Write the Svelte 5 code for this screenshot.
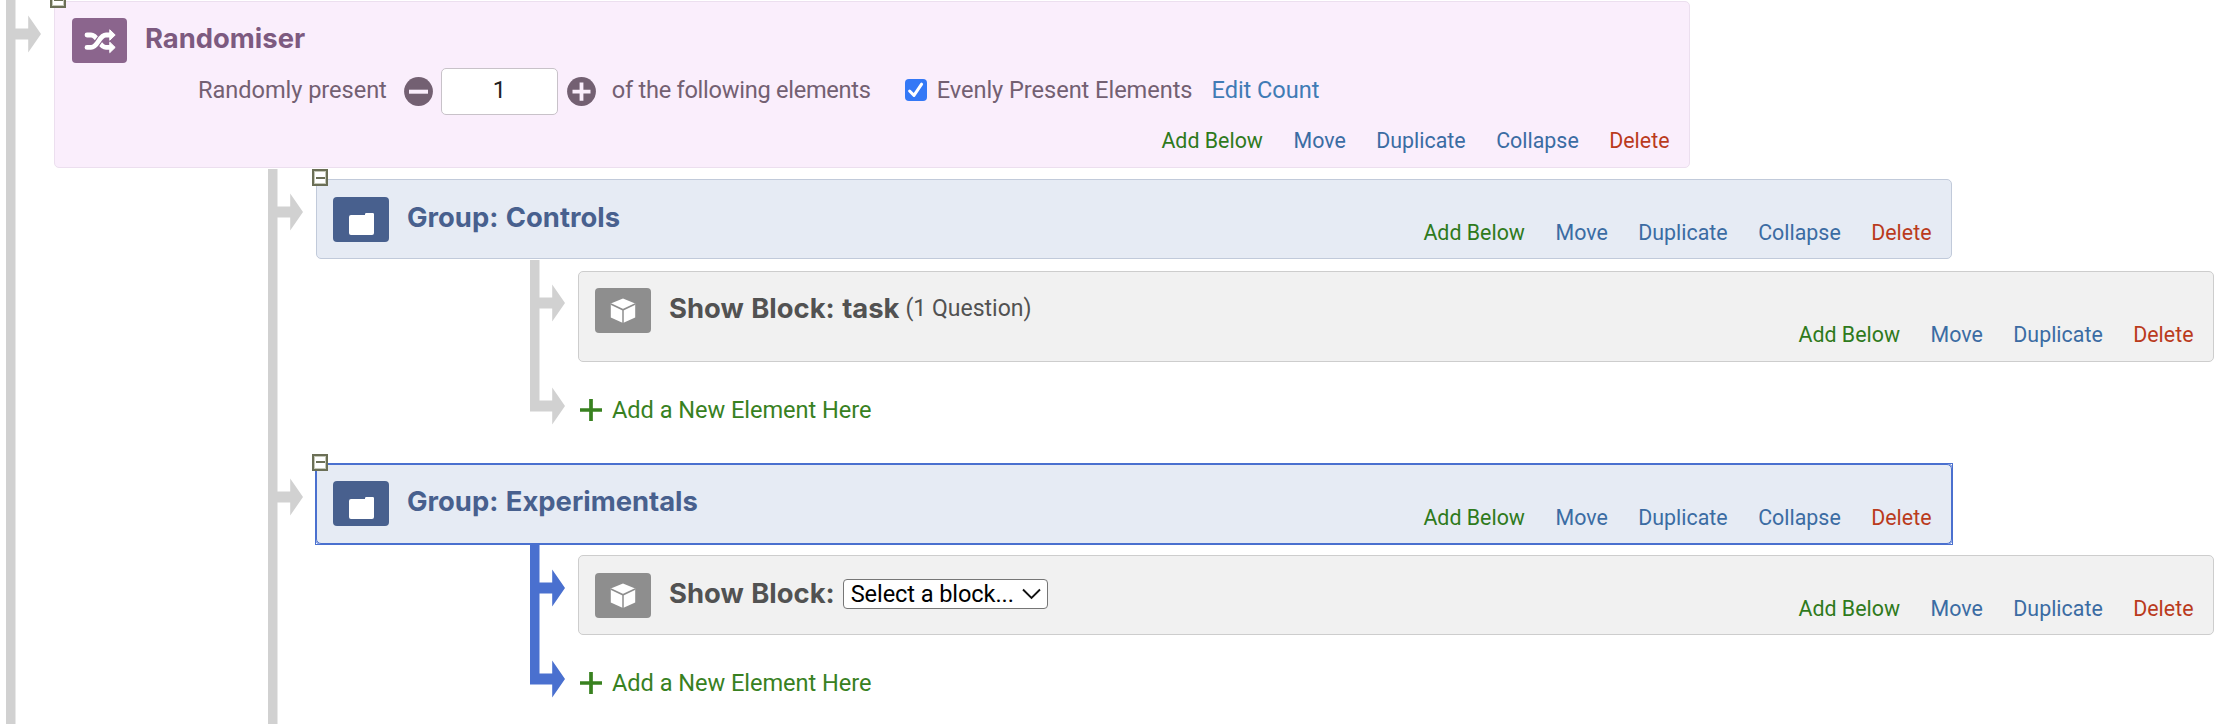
<script>
  const full = ['Add Below', 'Move', 'Duplicate', 'Collapse', 'Delete'];
  const short = ['Add Below', 'Move', 'Duplicate', 'Delete'];
  const tone = (a) => (a === 'Add Below' ? 'add' : a === 'Delete' ? 'delete' : 'plain');

  const groups = [
    { name: 'Group: Controls', selected: false, block: { title: 'Show Block: task', note: '(1 Question)' } },
    { name: 'Group: Experimentals', selected: true, block: { title: 'Show Block:', select: 'Select a block...' } }
  ];
</script>

{#snippet arrow()}
  <svg class="arrow" width="36" height="38" viewBox="0 0 36 38">
    <path d="M0 13.5H22.2V.5L35 19 22.2 37.5V24.5H0Z" fill="currentColor" />
  </svg>
{/snippet}

{#snippet toggle()}
  <span class="toggle"><i></i></span>
{/snippet}

{#snippet actions(list)}
  <nav class="actions">
    {#each list as a}<span class={tone(a)}>{a}</span>{/each}
  </nav>
{/snippet}

<main>
  <div class="node root">
    <div class="gutter">{@render arrow()}</div>
    <div class="body">
      <section class="box randomiser">
        {@render toggle()}
        <header>
          <span class="icon">
            <svg width="55" height="45" viewBox="0 0 55 45" fill="none" stroke="#fff" stroke-width="4.8" stroke-linecap="round">
              <path d="M15 17H19C26 17 27 29.4 34 29.4H39" />
              <path d="M15 29.4H19C26 29.4 27 17 34 17H39" stroke="#8b658d" stroke-width="7" stroke-linecap="butt" stroke-dasharray="0 8 13 40" />
              <path d="M15 29.4H19C26 29.4 27 17 34 17H39" />
              <path d="M38 12 43.2 17 38 22ZM38 24.4 43.2 29.4 38 34.4Z" fill="#fff" stroke-width="1" stroke-linejoin="round" />
            </svg>
          </span>
          <h2>Randomiser</h2>
        </header>
        <div class="settings">
          <span class="label">Randomly present</span>
          <svg class="minus" width="29" height="29" viewBox="0 0 29 29">
            <circle cx="14.5" cy="14.5" r="14.4" fill="#736072" />
            <path d="M5 14.7H24" stroke="#faeefc" stroke-width="4" />
          </svg>
          <span class="count">1</span>
          <svg class="plus" width="29" height="29" viewBox="0 0 29 29">
            <circle cx="14.5" cy="14.5" r="14.4" fill="#736072" />
            <path d="M5.5 14.7H23.5M14.5 5.5V23.7" stroke="#faeefc" stroke-width="3.8" />
          </svg>
          <span class="label following">of the following elements</span>
          <svg class="check" width="22" height="22" viewBox="0 0 22 22">
            <rect width="22" height="22" rx="4" fill="#3478f6" />
            <path d="M4.6 12 9 16.4 16.6 5.2" fill="none" stroke="#fff" stroke-width="3" stroke-linecap="round" stroke-linejoin="round" />
          </svg>
          <span class="label evenly">Evenly Present Elements</span>
          <span class="label edit">Edit Count</span>
        </div>
        {@render actions(full)}
      </section>

      <div class="children">
        {#each groups as g}
          <div class="node">
            <div class="gutter">{@render arrow()}</div>
            <div class="body">
              <section class="box group" class:selected={g.selected}>
                {@render toggle()}
                <header>
                  <span class="icon">
                    <svg width="56" height="45" viewBox="0 0 56 45">
                      <path d="M18 18H32V17.2Q32 16 33.2 16H39.8Q41 16 41 17.2V36Q41 38 39 38H18Q16 38 16 36V20Q16 18 18 18Z" fill="#fff" />
                    </svg>
                  </span>
                  <h2>{g.name}</h2>
                </header>
                {@render actions(full)}
              </section>

              <div class="children" class:active={g.selected}>
                <div class="node leaf">
                  <div class="gutter">{@render arrow()}</div>
                  <div class="body">
                    <section class="box block" class:tall={g.block.note}>
                      <header>
                        <span class="icon">
                          <svg width="56" height="45" viewBox="0 0 56 45">
                            <path d="M28 10.4 40.2 15.6V29.6L28 35 15.8 29.6V15.6Z" fill="#fff" />
                            <path d="M15.8 16 28 21.8 40.2 16M28 21.8V35" fill="none" stroke="#8e8e8e" stroke-width="1.5" />
                          </svg>
                        </span>
                        <h2>{g.block.title}</h2>
                        {#if g.block.note}<span class="note">{g.block.note}</span>{/if}
                        {#if g.block.select}
                          <span class="select">
                            {g.block.select}
                            <svg width="19" height="12" viewBox="0 0 19 12">
                              <path d="M1 1.5 9.5 10 18 1.5" fill="none" stroke="#111" stroke-width="1.9" />
                            </svg>
                          </span>
                        {/if}
                      </header>
                      {@render actions(short)}
                    </section>
                  </div>
                </div>
                <div class="node last">
                  <div class="gutter">{@render arrow()}</div>
                  <div class="new">
                    <svg width="22" height="22" viewBox="0 0 22 22">
                      <path d="M0 11H22M11 0V22" stroke="#38811f" stroke-width="3.7" />
                    </svg>
                    <span>Add a New Element Here</span>
                  </div>
                </div>
              </div>
            </div>
          </div>
        {/each}
      </div>
    </div>
  </div>
</main>

<style>
  :global(body) { background: #fff; }
  main {
    height: 724px;
    padding-left: 6px;
    overflow: hidden;
    box-sizing: border-box;
    font: 23.6px/28px Roboto, sans-serif;
    white-space: nowrap;
    color: #d1d1d1;
  }
  .node { display: grid; grid-template-columns: 48px auto; justify-content: start; }
  .root { min-height: 724px; }
  .gutter {
    padding-top: 24px;
    background: linear-gradient(currentColor, currentColor) 0 0 / 9.5px 100% no-repeat;
  }
  .arrow { display: block; }
  .body { padding-top: 10px; }
  .root > .body { padding-top: 1px; }
  .root > .gutter { padding-top: 14.5px; }
  .leaf > .body { padding-top: 10.5px; }
  .children { padding: 1px 0 0 214px; }
  .active { color: #4a70cf; }

  .box {
    position: relative;
    box-sizing: border-box;
    width: 1636px;
    height: 80px;
    border: 1px solid;
    border-radius: 5px;
    display: flex;
    flex-direction: column;
  }
  .randomiser { height: 167px; background: #faeefc; border-color: #ecdfef; color: #7d5a80; }
  .group { background: #e6ebf4; border-color: #c1cada; color: #48608e; }
  .selected { border-color: #4a70cf; outline: 1px solid #4a70cf; }
  .selected::after {
    content: '';
    position: absolute;
    inset: -2px;
    border: 1px solid #4a70cf;
    pointer-events: none;
  }
  .block { background: #f1f1f1; border-color: #cdcdcd; color: #525252; }
  .tall { height: 91px; }

  header { display: flex; height: 62px; flex: none; padding: 16.5px 0 0 16px; box-sizing: border-box; }
  .randomiser header { padding: 16px 0 0 17px; }
  .icon { width: 56px; height: 45px; border-radius: 4px; background: #8e8e8e; flex: none; }
  .randomiser .icon { width: 55px; background: #8b658d; }
  .group .icon { background: #48608e; }
  .icon svg { display: block; }
  h2 { margin: 2px 0 0 18px; font: 700 27.4px/36px Inter, sans-serif; word-spacing: 1px; }
  .note { margin: 7px 0 0 6px; font-size: 23px; }
  .select {
    display: flex;
    align-items: center;
    justify-content: space-between;
    box-sizing: border-box;
    width: 205px;
    height: 30px;
    margin: 6.5px 0 0 8px;
    padding: 0 6px 0 7px;
    border: 1px solid #767676;
    border-radius: 4px;
    background: #fff;
    color: #000;
    letter-spacing: -0.1px;
  }

  .settings {
    display: flex;
    align-items: center;
    height: 47px;
    margin-top: 3.5px;
    padding-left: 143px;
    color: #736072;
    letter-spacing: -0.05px;
  }
  .label { padding-bottom: 3px; }
  .minus { margin-left: 17px; }
  .count {
    box-sizing: border-box;
    width: 117px;
    height: 47px;
    margin: 0 9px 0 8px;
    border: 1px solid #c8c2c9;
    border-radius: 5px;
    background: #fff;
    color: #222;
    line-height: 43px;
    text-align: center;
  }
  .following { margin-left: 16px; letter-spacing: -0.27px; }
  .check { margin: 0 10px 3px 34px; }
  .edit { margin-left: 19px; color: #407bb5; }

  .actions {
    display: flex;
    justify-content: flex-end;
    gap: 30.5px;
    margin-top: auto;
    padding: 0 19.5px 13px 0;
    font-size: 21.4px;
    line-height: 26px;
  }
  .box header + .actions { margin-top: -22px; }
  .tall header + .actions { margin-top: -12px; }
  .plain { color: #3b6ca3; }
  .add { color: #2f7a1c; }
  .delete { color: #ba3b1d; }

  .toggle {
    position: absolute;
    left: -5px;
    top: -11px;
    z-index: 1;
    width: 16px;
    height: 17px;
    box-sizing: border-box;
    border: 2px solid #6b6f56;
    box-shadow: inset 0 0 0 1px #c5c8b8;
    background: #fff;
    display: flex;
    align-items: center;
    justify-content: center;
  }
  .toggle i { width: 9px; height: 2px; background: #6b6f56; }

  .last { height: 92px; }
  .last > .gutter { background-size: 9.5px 49px; padding-top: 25px; }
  .new {
    display: flex;
    align-items: center;
    gap: 10px;
    height: 28px;
    padding: 34px 0 0 2px;
    color: #38811f;
    letter-spacing: -0.05px;
  }
</style>
